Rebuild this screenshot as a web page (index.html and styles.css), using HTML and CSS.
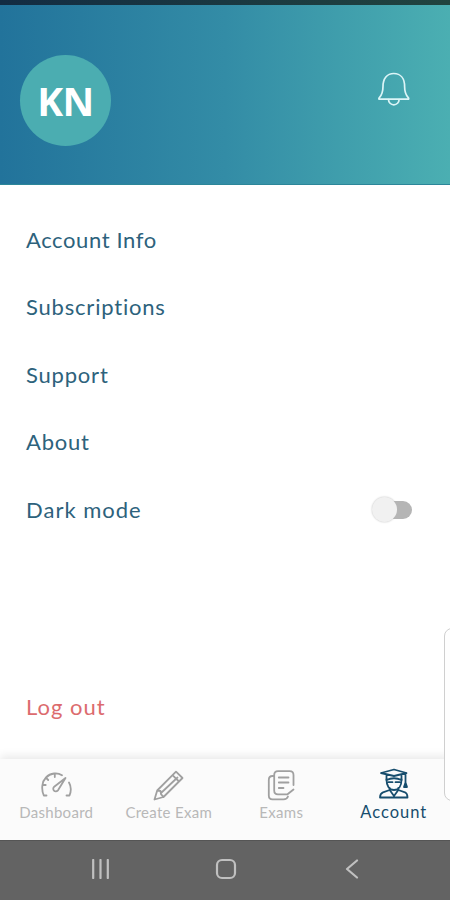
FILE: index.html
```
<!DOCTYPE html>
<html lang="en">
  <head>
    <meta charset="utf-8">
    <meta name="viewport" content="width=device-width, initial-scale=1">
    <title>Account</title>
    <link rel="stylesheet" href="styles.css">
  </head>
  <body>
    <div class="status"></div>
    <header>
      <div class="avatar">KN</div>
      <svg class="bell" width="34" height="36" viewBox="0 0 34 36">
        <path d="M2 27.200C5 24 6 21 6 15.500C6 7.500 10 2.500 16.800 2.500S27.600 7.500 27.600 15.500C27.600 21 28.600 24 31.600 27.200Q32 28.200 31 28.200H2.600Q1.500 28.200 2 27.200Z"/>
        <path d="M11.500 28.500a5.300 5.300 0 0 0 10.600 0"/>
      </svg>
    </header>
    <main>
      <ul class="menu">
        <li class="info">Account Info</li>
        <li>Subscriptions</li>
        <li>Support</li>
        <li>About</li>
        <li class="dark">Dark mode <span class="switch"></span></li>
      </ul>
      <div class="logout">Log out</div>
    </main>
    <nav class="tabs">
      <div class="tab">
        <svg width="34" height="34" viewBox="-1 0 34 34">
          <path d="M6.500 27.500H3.800C1 21 2 13.500 6 9.500C10.500 4.800 17.500 4.300 22 7.300M6.200 10l2 2M14.800 6v3M2.700 17h3M29 14.500C31.300 18.500 31.300 23 29.500 27.500H26.500"/>
          <path d="M25.500 10L14.200 18.800C11.500 21 15 25.500 18 22.300Z"/>
        </svg>
        <span>Dashboard</span>
      </div>
      <div class="tab">
        <svg width="34" height="34" viewBox="0 0 34 34">
          <path d="M2.500 31.500L5.200 22.500L24 3.700L30.500 10L11.500 29ZM5.200 22.500L8.500 23L9 26.200L11.500 29M9 25L25.500 9.500M20.500 7.200L27 13.500"/>
        </svg>
        <span>Create Exam</span>
      </div>
      <div class="tab">
        <svg width="34" height="34" viewBox="0 0 34 34">
          <path d="M29.500 17V7Q29.500 3.200 25.700 3.200H14Q10.200 3.200 10.200 7V22.500Q10.200 26.300 14 26.300H23.500L29.500 21.500"/>
          <path d="M9.500 8H8.500Q4.800 8 4.800 12V27.500Q4.800 31.300 8.500 31.300H19.500Q23 31.300 24 28.500M14.800 9.500H24.500M14.800 14.500H24.500M14.800 20H19.500"/>
        </svg>
        <span>Exams</span>
      </div>
      <div class="tab account">
        <svg width="34" height="34" viewBox="0 0 34 34">
          <path d="M4 5L17 1.500L29.500 5L17 8ZM9.500 7V12Q17 8.500 24.500 12V7M28.500 5.500V14.500M27 19L28.500 14.500L30 19Z"/>
          <path d="M9.500 11.500C9.500 17.500 12 22 17 22S24.500 17.500 24.500 11.500M11.500 14.200H15.500M18.500 14.200H22.500M12.700 20V22L6 24.300Q3 25.500 3 29.500H30.500Q30.500 25.500 28 24.300L21.300 22V20M12.700 22L17 28L21.300 22"/>
        </svg>
        <span>Account</span>
      </div>
    </nav>
    <footer>
      <svg width="20" height="20" viewBox="0 0 20 20"><path d="M3.200 1V19M10.500 1V19M17.800 1V19"/></svg>
      <svg width="22" height="22" viewBox="0 0 22 22"><rect x="2" y="2" width="18" height="18" rx="5"/></svg>
      <svg width="20" height="20" viewBox="0 0 20 20"><path d="M15 1.500L5 10L15 18.500"/></svg>
    </footer>
    <div class="edge-panel"></div>
  </body>
</html>
```

FILE: styles.css
```
* {
  box-sizing: border-box;
}
body {
  margin: 0;
  height: 900px;
  display: flex;
  flex-direction: column;
  position: relative;
  overflow: hidden;
  background: #fff;
  color: #2d627c;
  font-family: Lato, "Liberation Sans", sans-serif;
}
svg {
  display: block;
  fill: none;
  stroke: currentColor;
  stroke-linecap: round;
  stroke-linejoin: round;
}
.status {
  height: 5px;
  background: linear-gradient(to right, #132c43, #21443f);
}
header {
  height: 180px;
  padding: 0 39px 0 20px;
  display: flex;
  justify-content: space-between;
  background: linear-gradient(to right, #22739b, #338ca6 50%, #4bafb2);
  border-bottom: 1px solid #2c8699;
}
.avatar {
  width: 91px;
  height: 91px;
  margin-top: 50px;
  border-radius: 50%;
  background: #4badb1;
  color: #fff;
  font: 700 39px/91px "Open Sans", sans-serif;
  letter-spacing: -0.5px;
  text-align: center;
}
.bell {
  margin-top: 66px;
  color: #dcf5f7;
  stroke-width: 1.7;
}
main {
  height: 574px;
}
.menu {
  list-style: none;
  margin: 0;
  padding: 20.5px 38px 0 26px;
}
.menu li {
  height: 67.5px;
  display: flex;
  align-items: center;
  justify-content: space-between;
}
.menu li, .logout {
  font-size: 22px;
  letter-spacing: 0.8px;
}
.menu .info {
  letter-spacing: 0.6px;
}
.menu .dark, .logout {
  letter-spacing: 1px;
}
.switch {
  width: 40px;
  height: 26px;
  margin-top: 2px;
  padding: 4px 0 4px 12px;
  position: relative;
}
.switch::before {
  content: "";
  display: block;
  height: 18px;
  border-radius: 9px;
  background: #b5b5b5;
}
.switch::after {
  content: "";
  position: absolute;
  left: 0;
  top: 0;
  width: 25px;
  height: 25px;
  border-radius: 50%;
  background: #f1f1f1;
  box-shadow: 0 0 2px #bbb;
}
.logout {
  margin: 149.5px 0 0 26px;
  line-height: 28px;
  color: #dc6b6e;
}
.tabs {
  height: 81px;
  display: grid;
  grid-template-columns: repeat(4, 112.5px);
  background: #fbfbfb;
  box-shadow: 0 -3px 9px #e9e9e9;
}
.tab {
  display: flex;
  flex-direction: column;
  align-items: center;
  padding-top: 9px;
  color: #b8b8b8;
  font-size: 15px;
  line-height: 20px;
  letter-spacing: 0.3px;
  white-space: nowrap;
}
.tab svg {
  stroke-width: 1.8;
  color: #a0a0a0;
}
.account, .account svg {
  color: #174d6d;
}
.account span {
  font-size: 16.5px;
  letter-spacing: 1px;
}
footer {
  height: 60px;
  padding: 0 88px 3px 90px;
  display: flex;
  align-items: center;
  justify-content: space-between;
  background: #636363;
  border-top: 1px solid #555;
  color: #c0c0c0;
}
footer svg {
  stroke-width: 2.2;
}
/* handle that slides in over the right side of the screen */
.edge-panel {
  position: absolute;
  left: 444px;
  top: 628px;
  width: 20px;
  height: 173px;
  border: 1px solid #cfcfcf;
  border-radius: 8px;
  background: #fefefe;
}
```
